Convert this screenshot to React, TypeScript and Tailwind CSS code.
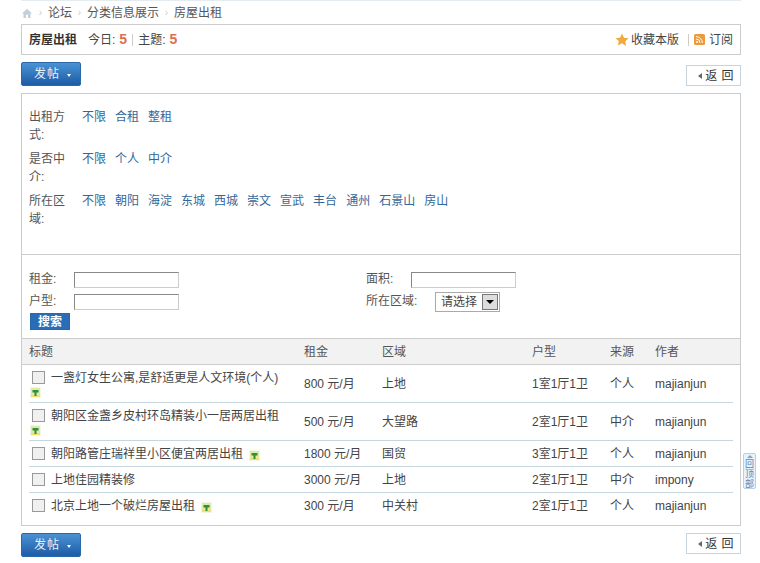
import type { ReactNode } from 'react';

const font = '[font-family:"Liberation_Sans","Noto_Sans_CJK_SC",sans-serif]';

const filters = [
  { label: '出租方式:', options: ['不限', '合租', '整租'] },
  { label: '是否中介:', options: ['不限', '个人', '中介'] },
  { label: '所在区域:', options: ['不限', '朝阳', '海淀', '东城', '西城', '崇文', '宣武', '丰台', '通州', '石景山', '房山'] },
];

const rows = [
  { title: '一盏灯女生公寓,是舒适更是人文环境(个人)', rent: '800 元/月', area: '上地', type: '1室1厅1卫', source: '个人', author: 'majianjun', pic: true, h: 'h-[38px]' },
  { title: '朝阳区金盏乡皮村环岛精装小一居两居出租', rent: '500 元/月', area: '大望路', type: '2室1厅1卫', source: '中介', author: 'majianjun', pic: true, h: 'h-[38px]' },
  { title: '朝阳路管庄瑞祥里小区便宜两居出租', rent: '1800 元/月', area: '国贸', type: '3室1厅1卫', source: '个人', author: 'majianjun', pic: true, h: 'h-[26px]' },
  { title: '上地佳园精装修', rent: '3000 元/月', area: '上地', type: '2室1厅1卫', source: '中介', author: 'impony', pic: false, h: 'h-[26px]' },
  { title: '北京上地一个破烂房屋出租', rent: '300 元/月', area: '中关村', type: '2室1厅1卫', source: '个人', author: 'majianjun', pic: true, h: 'h-[26px]' },
];

function PicIcon() {
  return (
    <svg width="11" height="11" viewBox="0 0 11 11" className="ml-px inline-block align-[-3px]">
      <rect width="11" height="11" fill="#f3f6e2" />
      <rect x="1" y="1" width="9" height="7" fill="#dfe9a8" />
      <rect x="1" y="8" width="9" height="2" fill="#f0e070" />
      <path d="M2.500 3h6v2.500H6.500V9h-2V5.500h-2z" fill="#2f8f3a" />
    </svg>
  );
}

function PostButton() {
  return (
    <button className="flex h-6 w-[60px] items-center rounded-[2px] border border-[#2a69a8] bg-gradient-to-b from-[#4a92d4] to-[#1d5ca6] pl-3 text-xs tracking-[1px] text-[#e8f0f8]">
      发帖
      <span className="mt-[2px] ml-[7px] h-0 w-0 border-x-[2.500px] border-t-[3px] border-x-transparent border-t-white" />
    </button>
  );
}

function BackButton() {
  return (
    <button className="flex h-[21px] w-[55px] items-center justify-end gap-[3px] border border-[#c6d4e0] bg-white pr-[6px] text-xs text-[#333]">
      <span className="h-0 w-0 border-y-[3px] border-r-[4px] border-y-transparent border-r-[#666]" />
      <span className="tracking-[0.5px]">返 回</span>
    </button>
  );
}

function Field({ label, width, children }: { label: string; width: string; children: ReactNode }) {
  return (
    <div className="flex h-[22px] items-center">
      <span className={`${width} -mt-[3px] text-[#555]`}>{label}</span>
      {children}
    </div>
  );
}

function TextBox() {
  return <input className="h-4 w-[105px] border border-[#ccc] border-t-[#888] border-l-[#888] bg-white" />;
}

function Crumb() {
  return <span className="w-[15px] text-center text-[10px] leading-none text-[#ccc]">›</span>;
}

export default function App() {
  return (
    <div className={`${font} relative h-[563px] w-[760px] overflow-hidden bg-white text-xs text-[#444]`}>
      <div className="mx-[21px] w-[720px] border-t border-[#e4ecf2]">
        {/* Breadcrumb */}
        <div className="flex h-[23px] items-center pt-px text-[#555]">
          <svg width="10" height="10" viewBox="0 0 10 10" className="mr-px ml-px">
            <path d="M5 .8 0 5.400h1.500V10h2.400V6.800h2.200V10h2.400V5.400H10z" fill="#c3d0da" />
          </svg>
          <Crumb />
          <span>论坛</span>
          <Crumb />
          <span>分类信息展示</span>
          <Crumb />
          <span>房屋出租</span>
        </div>

        {/* Forum header */}
        <div className="flex h-[31px] items-center justify-between border border-[#ccc] px-[7px]">
          <div className="flex items-center">
            <strong className="mr-[11px] text-[#333]">房屋出租</strong>
            <span>今日:</span>
            <b className="ml-1 text-[14px] text-[#e0704c]">5</b>
            <span className="mx-[5px] h-3 border-l border-[#ccc]" />
            <span>主题:</span>
            <b className="ml-1 text-[14px] text-[#e0704c]">5</b>
          </div>
          <div className="flex items-center">
            <svg width="14" height="14" viewBox="0 0 24 24" className="mr-[2px]">
              <path d="m12 1 3.400 7.200 7.800 1-5.700 5.400 1.500 7.800L12 17.600l-7 3.800 1.500-7.800L.8 9.200l7.800-1z" fill="#f0a840" />
            </svg>
            <span>收藏本版</span>
            <span className="mr-[5px] ml-[9px] h-3 border-l border-[#ccc]" />
            <svg width="11" height="11" viewBox="0 0 11 11" className="mr-1">
              <rect width="11" height="11" rx="1.500" fill="#ee9a3a" />
              <circle cx="3" cy="8" r="1" fill="#fff" />
              <path d="M2 5a4 4 0 0 1 4 4M2 2.600A6.400 6.400 0 0 1 8.400 9" stroke="#fff" fill="none" />
            </svg>
            <span>订阅</span>
          </div>
        </div>

        {/* Toolbar */}
        <div className="flex items-end justify-between py-[7px]">
          <PostButton />
          <BackButton />
        </div>

        {/* Listing */}
        <div className="border border-[#ccc]">
          <div className="h-[161px] border-b border-[#ccc] pt-[14px] pl-[7px]">
            {filters.map((f) => (
              <div key={f.label} className="flex h-[42px] leading-[18px]">
                <span className="w-[53px] pr-4 text-[#555]">{f.label}</span>
                <div className="flex gap-[9px] text-[#336699]">
                  {f.options.map((o) => (
                    <a key={o}>{o}</a>
                  ))}
                </div>
              </div>
            ))}
          </div>

          <div className="h-[83px] pt-[14px] pl-[7px]">
            <div className="grid grid-cols-[337px_1fr]">
              <Field label="租金:" width="w-[45px]">
                <TextBox />
              </Field>
              <Field label="面积:" width="w-[45px]">
                <TextBox />
              </Field>
              <Field label="户型:" width="w-[45px]">
                <TextBox />
              </Field>
              <Field label="所在区域:" width="w-[69px]">
                <div className="flex h-5 w-[65px] items-center justify-between border border-[#aaa] pr-[1px] pl-[5px] text-[#444]">
                  请选择
                  <span className="flex h-4 w-4 items-center justify-center border border-[#777] bg-[#ddd]">
                    <span className="h-0 w-0 border-x-[4px] border-t-[4px] border-x-transparent border-t-black" />
                  </span>
                </div>
              </Field>
            </div>
            <button className="ml-[1px] block h-[17px] w-10 border border-[#2a69a8] bg-[#2a6cb6] text-xs font-bold text-white">
              搜索
            </button>
          </div>

          <div className="flex h-[27px] items-center border-y border-[#ccc] bg-[#f2f2f2] pl-[7px] text-[#555]">
            <span className="w-[275px]">标题</span>
            <span className="w-[78px]">租金</span>
            <span className="w-[150px]">区域</span>
            <span className="w-[78px]">户型</span>
            <span className="w-[45px]">来源</span>
            <span>作者</span>
          </div>

          <div className="mx-[7px] mb-[6px]">
            {rows.map((r, i) => (
              <div
                key={r.title}
                className={`flex items-center ${r.h} ${i < rows.length - 1 ? 'border-b border-[#c5d6de]' : ''}`}
              >
                <div className="w-[275px] self-start pt-[6px] pr-[13px] leading-[13px] [word-spacing:2px]">
                  <input type="checkbox" className="mr-[6px] ml-[3px] h-[13px] w-[13px] align-[-2px] appearance-none border border-[#999] bg-[#f0f0f0]" />
                  <span className="text-[#444]">{r.title}</span> {r.pic && <PicIcon />}
                </div>
                <span className="w-[78px]">{r.rent}</span>
                <span className="w-[150px]">{r.area}</span>
                <span className="w-[78px]">{r.type}</span>
                <span className="w-[45px]">{r.source}</span>
                <span>{r.author}</span>
              </div>
            ))}
          </div>
        </div>

        {/* Footer toolbar */}
        <div className="mt-[7px] flex items-start justify-between">
          <PostButton />
          <BackButton />
        </div>
      </div>

      {/* Back to top */}
      <div className="absolute top-[453px] left-[743px] flex h-[36px] w-[13px] flex-col items-center overflow-hidden rounded-[2px] border border-[#b5d0e8] bg-[#e8f2fb] pt-[1px] text-[9px] leading-[10px] text-[#5588bb]">
        <span className="mb-[1px] h-0 w-0 border-x-[3px] border-b-[3px] border-x-transparent border-b-[#7aa5cc]" />
        <span>回</span>
        <span>顶</span>
        <span>部</span>
      </div>
    </div>
  );
}
